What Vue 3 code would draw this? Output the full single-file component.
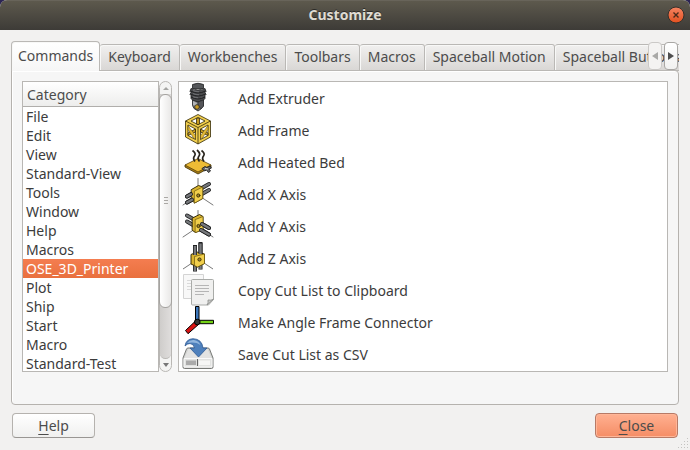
<script setup>
import { ref } from 'vue'

const tabs = ['Commands', 'Keyboard', 'Workbenches', 'Toolbars', 'Macros', 'Spaceball Motion', 'Spaceball Buttons']
const activeTab = ref('Commands')
const categories = [
  'File', 'Edit', 'View', 'Standard-View', 'Tools', 'Window', 'Help', 'Macros',
  'OSE_3D_Printer', 'Plot', 'Ship', 'Start', 'Macro', 'Standard-Test',
]
const selected = ref('OSE_3D_Printer')
const commands = [
  { icon: 'extruder', label: 'Add Extruder' },
  { icon: 'frame', label: 'Add Frame' },
  { icon: 'bed', label: 'Add Heated Bed' },
  { icon: 'x', label: 'Add X Axis' },
  { icon: 'y', label: 'Add Y Axis' },
  { icon: 'z', label: 'Add Z Axis' },
  { icon: 'copy', label: 'Copy Cut List to Clipboard' },
  { icon: 'angle', label: 'Make Angle Frame Connector' },
  { icon: 'save', label: 'Save Cut List as CSV' },
]
</script>

<template>
  <div class="desktop">
    <main class="window">
      <header class="titlebar">
        <h1>Customize</h1>
        <button class="close-window" aria-label="Close window">
          <svg viewBox="0 0 18 18" width="18" height="18">
            <defs>
              <linearGradient id="closeFill" x1="0" y1="0" x2="0" y2="1">
                <stop offset="0" stop-color="#f58462" /><stop offset="1" stop-color="#e2501f" />
              </linearGradient>
            </defs>
            <circle cx="9" cy="9" r="8" fill="url(#closeFill)" stroke="#33302b" />
            <path d="M6.5 6.5l5 5M11.5 6.5l-5 5" stroke="#4a2a1a" stroke-width="1.4" />
          </svg>
        </button>
      </header>

      <div class="content">
        <div class="tabrow">
          <div class="tabs" role="tablist">
            <button
              v-for="t in tabs" :key="t" role="tab" class="tab"
              :class="{ active: t === activeTab }" :aria-selected="t === activeTab"
              @click="activeTab = t"
            >{{ t }}</button>
          </div>
          <div class="tabscroll">
            <button class="arrow dim" aria-label="Previous tabs" disabled>
              <svg viewBox="0 0 6 8" width="6" height="8"><path d="M6 0v8L0 4z" fill="#a9a9a7" /></svg>
            </button>
            <button class="arrow" aria-label="Next tabs">
              <svg viewBox="0 0 6 8" width="6" height="8"><path d="M0 0v8l6-4z" fill="#4f4f4f" /></svg>
            </button>
          </div>
        </div>

        <section class="pane">
          <div class="category">
            <div class="tree">
              <div class="tree-head">Category</div>
              <ul>
                <li v-for="c in categories" :key="c">
                  <button class="cat" :class="{ chosen: c === selected }" @click="selected = c">{{ c }}</button>
                </li>
              </ul>
            </div>
            <div class="scrollbar">
              <button class="step" aria-label="Scroll up">
                <svg viewBox="0 0 6 4" width="6" height="4"><path d="M0 4h6L3 1z" fill="#a5a5a3" /></svg>
              </button>
              <div class="track">
                <div class="thumb"><i></i><i></i><i></i></div>
              </div>
              <button class="step" aria-label="Scroll down">
                <svg viewBox="0 0 6 4" width="6" height="4"><path d="M0 0h6L3 4z" fill="#777" /></svg>
              </button>
            </div>
          </div>

          <ul class="commands">
            <li v-for="c in commands" :key="c.label">
              <svg class="icon" viewBox="0 0 32 32" width="32" height="32" aria-hidden="true">
                <g v-if="c.icon === 'extruder'" stroke="#202122" stroke-linejoin="round">
                  <path d="M10.5 2.500q5.500-2.500 11 0v4h-11z" fill="#55575a" stroke-width=".8" />
                  <path d="M9 6.500q7 3 14 0l1 3-1 1 1 2-1 1v3l-3 3h-8l-3-3v-3l-1-1 1-2-1-1z" fill="#4a4b4e" stroke-width=".8" />
                  <path d="M8.500 9q7.500 4 15 0M8.500 12q7.500 4 15 0M9 15q7 4 14 0" fill="none" />
                  <path d="M11 8.500q3 1.500 6 1.200M11 11.500q3 1.500 6 1.200M11 14.700q3 1.300 5 1" fill="none" stroke="#77797c" stroke-width=".8" />
                  <path d="M10.500 18l5.500 2 5.500-2v6l-2.500 3-3 2-4-2.500-1.500-3z" fill="#77797c" stroke-width=".8" />
                  <path d="M16 20l5.500-2v6l-2.500 3-3-4z" fill="#55565a" stroke-width=".5" />
                  <path d="M11 19l4 2-1 3-3-1z" fill="#b4b6b9" stroke="none" />
                  <circle cx="15" cy="25" r="2.300" fill="#c79a25" stroke-width=".7" />
                </g>

                <g v-else-if="c.icon === 'frame'" stroke="#342b08" stroke-width=".8" stroke-linejoin="round">
                  <path fill="#f0cd4d" d="M16 .5L28.500 7v16L16 30 3.500 23V7z" />
                  <path fill="#fff" d="M16 3.500L9 7l7 3.700L23 7zM6 11v10.500l7.500 4V15zM26 11v10.500l-7.500 4V15z" />
                  <path fill="#c99d22" d="M14.500 4.200h3v5.700l-1.500.8-1.500-.8zM6 19l7.500-4v3L6 21.500zM26 19l-7.500-4v3l7.500 3.500z" />
                  <path fill="#e0b735" d="M6 11.500l7.500 10v3.500l-2-1L6 15.500zM26 11.500l-7.500 10v3.500l2-1L26 15.500z" stroke-width=".4" />
                  <path fill="none" d="M3.500 7L16 13.500 28.500 7M16 13.500V30" />
                </g>

                <g v-else-if="c.icon === 'bed'" stroke-linejoin="round">
                  <path d="M3 19v2l13 7 13-7v-2z" fill="#a97e14" stroke="#3b2d06" stroke-width=".8" />
                  <path d="M16 12.500L29 19l-13 7L3 19z" fill="#eebc35" stroke="#5a430b" stroke-width=".8" />
                  <path d="M13 15.500q-2.500-3-.5-5.500T10.500 4.500M17.500 15.500q-2.500-3-.5-5.500T15 4M22 15.500q-2.500-3-.5-5.500T19.500 4.500" fill="none" stroke="#29251d" stroke-width="1.700" />
                  <path d="M20 22.500l3-2 2 1 3-1.500 1.500 2-2.500 1 1.500 2-2 1.500-2-2.500-2 1z" fill="#6a6b6d" stroke="#202020" stroke-width=".9" />
                  <path d="M23 22.500l3 .5" stroke="#d9d9d9" />
                </g>

                <g v-else-if="c.icon === 'x'" stroke-linejoin="round" stroke-linecap="round">
                  <path d="M16 .5v16M16 17L1 27M16 17l15 10" stroke="#555" stroke-width=".8" />
                  <path d="M5 18.500L27 6M5 24.500L27 12" stroke="#202122" stroke-width="4" />
                  <path d="M5 18.500L27 6M5 24.500L27 12" stroke="#77797c" stroke-width="2.400" />
                  <path d="M9.500 11.500l7-4 4.200 1.500v11.500l-8 4.500-3.200-3z" fill="#d8b32f" stroke="#3b3008" />
                  <path d="M12.700 13l8-4v11.500l-8 4.500z" fill="#f1cf4c" stroke="#6b5710" stroke-width=".7" />
                  <path d="M5 18.500l4-2.300M5 24.500l5-2.800" stroke="#202122" stroke-width="4" />
                  <path d="M5 18.500l4-2.300M5 24.500l5-2.800" stroke="#77797c" stroke-width="2.400" />
                  <circle cx="16.300" cy="17.500" r="1.600" fill="#a78726" stroke="#3b3008" />
                </g>

                <g v-else-if="c.icon === 'y'" stroke-linejoin="round" stroke-linecap="round">
                  <path d="M16 .5v16M16 17L1 27M16 17l15 10" stroke="#555" stroke-width=".8" />
                  <path d="M5 5.500l22 12.500M5 11.500l22 13" stroke="#202122" stroke-width="4" />
                  <path d="M5 5.500l22 12.500M5 11.500l22 13" stroke="#77797c" stroke-width="2.400" />
                  <path d="M10.500 8l7-3.500 3.500 2v13l-7.500 3-3-2z" fill="#d8b32f" stroke="#3b3008" />
                  <path d="M13.500 9.500l7.500-3v13l-7.500 3z" fill="#f1cf4c" stroke="#6b5710" stroke-width=".7" />
                  <path d="M20 14l7 4M19 20l8 4.500" stroke="#202122" stroke-width="4" />
                  <path d="M20 14l7 4M19 20l8 4.500" stroke="#77797c" stroke-width="2.400" />
                  <circle cx="16.500" cy="16" r="1.600" fill="#a78726" stroke="#3b3008" />
                </g>

                <g v-else-if="c.icon === 'z'" stroke-linejoin="round">
                  <path d="M16 17L1 27M16 17l15 10" stroke="#555" stroke-width=".8" />
                  <path d="M13 3v26.500M18.500 1v26.500" stroke="#202122" stroke-width="4" />
                  <path d="M13 4v25M18.500 2v25" stroke="#77797c" stroke-width="2.400" />
                  <path d="M9 12.500l6-2.500 7.500 2v9.500l-7 3.500L9 22z" fill="#d8b32f" stroke="#3b3008" />
                  <path d="M12.500 14.500l10-2.500v9.500l-7 3.500-3-1.500z" fill="#f1cf4c" stroke="#6b5710" stroke-width=".7" />
                  <path d="M13 3v10M18.500 0v12" stroke="#202122" stroke-width="4" />
                  <path d="M13 4v9M18.500 1.500V12" stroke="#77797c" stroke-width="2.400" />
                  <circle cx="17.500" cy="17.500" r="1.600" fill="#a78726" stroke="#3b3008" />
                </g>

                <g v-else-if="c.icon === 'copy'">
                  <path d="M1.500.5h20v24h-20z" fill="#f8f8f8" stroke="#d4d4d4" />
                  <path d="M5 6.500h12M5 9.500h12M5 12.500h8M5 15.500h8" stroke="#dadada" />
                  <path d="M9.500 6.500q0-1 1-1h20q1 0 1 1v19l-5 5.500h-16q-1 0-1-1z" fill="#f0f0ef" stroke="#a9aba8" />
                  <path d="M13 11.500h14M13 14.500h14M13 17.500h14M13 20.500h9" stroke="#b5b5b5" />
                  <path d="M25 31q1.500-2 1-5 3 .7 5.500-.8z" fill="#c8c9c7" stroke="#8b8d8a" stroke-width=".8" />
                </g>

                <g v-else-if="c.icon === 'angle'" stroke="#000">
                  <path d="M13.500.5h3.500V15h-3.500z" fill="#3d78bd" />
                  <path d="M16 14.300h15.500v3.400H16z" fill="#73d216" />
                  <path d="M13.500 15L3.500 24.500l2.500 3.200L17 18z" fill="#d81313" />
                  <circle cx="15.300" cy="16" r="2.800" fill="#353635" />
                </g>

                <g v-else stroke-linejoin="round">
                  <path d="M6 10h20q1 0 1.500 1L31 20v9q0 1.500-1.500 1.500h-27Q1 30.500 1 29v-9l3.500-9Q5 10 6 10z" fill="#d2d3d1" stroke="#777976" />
                  <path d="M6.500 11h19l4 9h-27z" fill="#e3e3e2" />
                  <path d="M2 20.500h28v8.500H2z" fill="#e1e2e0" stroke="#fafafa" />
                  <path d="M4 22.500h10v4.500H4z" fill="#aaa" />
                  <path d="M15.500 21v7" stroke="#666" />
                  <path d="M17 22.500h11v4.500H17z" fill="#f6f6f5" />
                  <path d="M3 8Q4 1 11 .7q9 .3 10 9.300h4L16.500 19 8 10h4.500Q12 6 8 5.500 5 5.500 3 8z" fill="#4e80bc" stroke="#2e5993" stroke-width=".8" />
                  <path d="M5 5Q8 1.500 12 2q5 1 6.500 5Q14 3.500 5 5z" fill="#91b5de" />
                </g>
              </svg>
              <span>{{ c.label }}</span>
            </li>
          </ul>
        </section>

        <footer class="actions">
          <button class="btn"><u>H</u>elp</button>
          <button class="btn primary"><u>C</u>lose</button>
        </footer>
      </div>
      <svg class="grip" viewBox="0 0 12 12" width="12" height="12" aria-hidden="true">
        <path d="M10 1.500h1M7 4.500h1M10 4.500h1M4 7.500h1M7 7.500h1M10 7.500h1M1 10.500h1M4 10.500h1M7 10.500h1M10 10.500h1" stroke="#c4c3c1" />
      </svg>
    </main>
  </div>
</template>

<style>
body { margin: 0; }
</style>

<style scoped>
* { box-sizing: border-box; }
button { font: inherit; color: inherit; margin: 0; padding: 0; border: 0; background: none; }
ul { list-style: none; margin: 0; padding: 0; }
svg { display: block; flex: none; }

.desktop { background: #2c2553; }
.window {
  position: relative;
  display: flex;
  flex-direction: column;
  min-height: 100vh;
  overflow: hidden;
  border-radius: 7px 7px 0 0;
  background: #f2f1f0;
  color: #4c4c4c;
  font: 14px/19px "Noto Sans", "Open Sans", sans-serif;
}
.titlebar {
  display: grid;
  grid-template-columns: 1fr auto 1fr;
  align-items: center;
  height: 30px;
  padding: 0 5px 2px;
  background: linear-gradient(#5d594d, #3d3b37);
  border-top: 1px solid #68645a;
}
.titlebar h1 {
  grid-column: 2;
  margin: 0;
  font-size: 14px;
  font-weight: 700;
  color: #dfdbd2;
  text-shadow: 0 -1px #2b2a27;
}
.close-window { justify-self: end; }

.content {
  display: flex;
  flex: 1;
  flex-direction: column;
  padding: 11px 11px 12px;
}
.tabrow { position: relative; z-index: 1; margin-bottom: -1px; }
.tabs { display: flex; align-items: flex-end; overflow: hidden; height: 30px; }
.tab {
  flex: none;
  height: 27px;
  padding: 0 8px 2px;
  border: 1px solid #bab8b5;
  border-left-width: 0;
  border-radius: 3px 3px 0 0;
  background: linear-gradient(#f1f0ef, #d9d7d5);
  box-shadow: inset 1px 1px #f8f8f7;
}
.tab.active {
  height: 30px;
  padding: 0 6px 2px;
  border-left-width: 1px;
  border-bottom: 0;
  border-radius: 4px 4px 0 0;
  background: linear-gradient(#fff, #f6f6f6);
}
.tabscroll { position: absolute; top: 1px; right: 1px; display: flex; gap: 2px; }
.arrow {
  display: grid;
  place-items: center;
  width: 14px;
  height: 28px;
  border: 1px solid #a9a7a4;
  border-radius: 4px;
  background: linear-gradient(#fff, #f1f1f0);
}
.arrow.dim { border-color: #cbc9c7; background: #f4f3f2; }

.pane {
  display: flex;
  flex: 1;
  align-items: flex-start;
  gap: 6px;
  padding: 10px;
  border: 1px solid #b5b2ae;
  border-radius: 0 4px 4px 4px;
  background: #f6f6f6;
  box-shadow: inset 1px 1px #fff;
}
.category { display: flex; flex: none; width: 150px; height: 291px; }
.tree {
  flex: 1;
  overflow: hidden;
  border: 1px solid #b9b7b4;
  background: #fff;
}
.tree-head {
  height: 25px;
  padding: 3px 4px;
  border-bottom: 1px solid #b0aeab;
  background: linear-gradient(#fff, #ededec);
}
.cat { display: block; width: 100%; height: 19px; padding: 0 3px; text-align: left; color: #3c3c3c; }
.cat.chosen { background: linear-gradient(#f47d50, #e9703e); color: #fff; }

.scrollbar {
  display: flex;
  flex-direction: column;
  width: 13px;
  border: 1px solid #b9b7b4;
  border-radius: 7px;
  background: #f4f4f3;
}
.step { display: grid; place-items: center; height: 12px; }
.track {
  flex: 1;
  border-bottom: 1px solid #b9b7b4;
  border-radius: 0 0 6px 6px;
  background: linear-gradient(90deg, #cfcdcb, #dfdddc);
}
.thumb {
  display: flex;
  flex-direction: column;
  align-items: center;
  justify-content: center;
  gap: 2px;
  height: 81%;
  margin: 0 -1px;
  border: 1px solid #a5a3a0;
  border-radius: 6px;
  background: linear-gradient(90deg, #fff, #e9e8e7);
}
.thumb i { width: 4px; height: 1px; background: #aaa8a5; }

.commands {
  flex: 1;
  height: 291px;
  padding: 0 3px;
  overflow: hidden;
  border: 1px solid #b9b7b4;
  background: #fff;
  color: #3c3c3c;
}
.commands li { display: flex; align-items: center; gap: 24px; height: 32px; }

.actions { display: flex; justify-content: space-between; padding: 8px 1px 0; }
.btn {
  width: 83px;
  height: 25px;
  border: 1px solid #b5b2ae;
  border-bottom-color: #999693;
  border-radius: 4px;
  background: linear-gradient(#fff, #f0f0ef);
  box-shadow: inset 0 1px #fff;
}
.btn u { text-underline-offset: 3px; text-decoration-thickness: 1px; }
.btn.primary {
  border-color: #b77a66;
  background: linear-gradient(#ffb091, #f58d65);
  box-shadow: inset 0 0 0 1px #ffb698;
}
.grip { position: absolute; right: 1px; bottom: 1px; }
</style>
